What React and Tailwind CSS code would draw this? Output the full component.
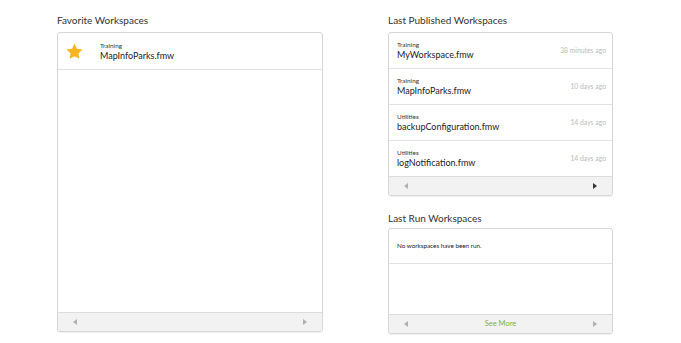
import React from "react";

const font = { fontFamily: "Lato, 'Open Sans', sans-serif" };

function Footer({ seeMore = false, rightDark = false }) {
  return (
    <div className="flex h-[19px] items-center justify-between border-t border-[#dcdcdc] bg-[#f2f2f2] px-[15px]">
      <span className="h-0 w-0 border-y-[3px] border-r-[4px] border-y-transparent border-r-[#b0b0b0]" />
      {seeMore && <span className="text-[7.5px] text-[#7cb342]">See More</span>}
      <span
        className={
          "h-0 w-0 border-y-[3px] border-l-[4px] border-y-transparent " +
          (rightDark ? "border-l-[#333]" : "border-l-[#b0b0b0]")
        }
      />
    </div>
  );
}

function Row({ cat, name, time }) {
  return (
    <div className="flex h-[36px] items-center justify-between border-b border-[#e2e2e2] pl-[8px] pr-[6px]">
      <div className="flex flex-col">
        <span className="text-[6.4px] leading-[9px] text-[#333]">{cat}</span>
        <span className="text-[9px] leading-[12px] text-[#222]">{name}</span>
      </div>
      <span className="text-[6.8px] text-[#bbbbbb]">{time}</span>
    </div>
  );
}

export default function App() {
  return (
    <div style={font} className="flex h-[343px] w-[681px] gap-[65px] bg-white pl-[57px] pt-[13px]">
      <div className="flex w-[266px] flex-col">
        <div className="h-[19px] text-[10px] leading-[14px] text-[#333]">Favorite Workspaces</div>
        <div className="flex h-[300px] flex-col overflow-hidden rounded-[3px] border border-[#d6d6d6] shadow-[0_1px_1px_rgba(0,0,0,0.06)]">
          <div className="flex h-[37px] items-center border-b border-[#e2e2e2]">
            <div className="flex w-[42px] justify-start pl-[8px]">
              <svg width="17" height="16" viewBox="0 0 24 23">
                <path d="M12 0.8l3.5 7.3 8 1.1-5.8 5.6 1.4 7.9L12 18.9l-7.1 3.8 1.4-7.9L0.5 9.2l8-1.1z" fill="#f9b51e" />
              </svg>
            </div>
            <div className="flex flex-col">
              <span className="text-[6.4px] leading-[9px] text-[#333]">Training</span>
              <span className="text-[9px] leading-[12px] text-[#222]">MapInfoParks.fmw</span>
            </div>
          </div>
          <div className="flex-1" />
          <Footer />
        </div>
      </div>
      <div className="flex w-[225px] flex-col">
        <div className="h-[19px] text-[10px] leading-[14px] text-[#333]">Last Published Workspaces</div>
        <div className="flex flex-col overflow-hidden rounded-[3px] border border-[#d6d6d6] shadow-[0_1px_1px_rgba(0,0,0,0.06)]">
          <Row cat="Training" name="MyWorkspace.fmw" time="38 minutes ago" />
          <Row cat="Training" name="MapInfoParks.fmw" time="10 days ago" />
          <Row cat="Utilities" name="backupConfiguration.fmw" time="14 days ago" />
          <div className="-mb-px">
            <Row cat="Utilities" name="logNotification.fmw" time="14 days ago" />
          </div>
          <Footer rightDark />
        </div>
        <div className="mt-[15px] h-[17px] text-[10px] leading-[14px] text-[#333]">Last Run Workspaces</div>
        <div className="flex h-[106px] flex-col overflow-hidden rounded-[3px] border border-[#d6d6d6] shadow-[0_1px_1px_rgba(0,0,0,0.06)]">
          <div className="flex h-[35px] items-center border-b border-[#e2e2e2] pl-[8px] text-[6.3px] text-[#222]">
            No workspaces have been run.
          </div>
          <div className="flex-1" />
          <Footer seeMore />
        </div>
      </div>
    </div>
  );
}
